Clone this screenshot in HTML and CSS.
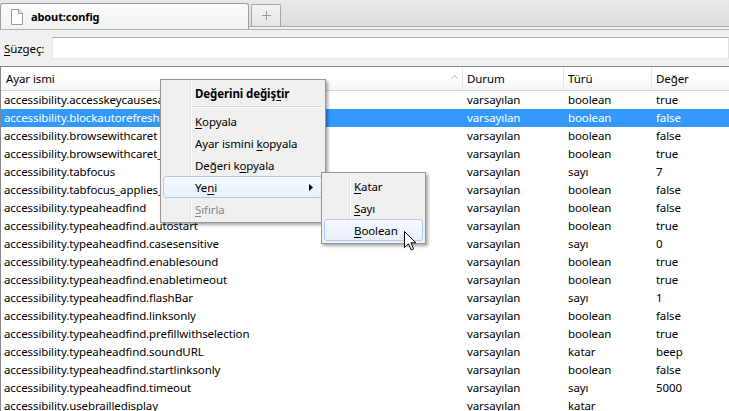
FILE: index.html
```html
<!DOCTYPE html>
<html lang="tr">
<head>
<meta charset="utf-8">
<title>about:config</title>
<link rel="stylesheet" href="styles.css">
</head>
<body>
<div class="tabstrip">
  <div class="tab">
    <svg class="pageicon" width="14" height="16" viewBox="0 0 14 16"><path d="M1.5 0.5 H9 L12.5 4 V15.5 H1.5 Z" fill="#fff" stroke="#9a9a9a"/><path d="M8.5 0.5 V4.5 H12.5" fill="#eee" stroke="#9a9a9a"/></svg>
    <span class="tabtitle">about:config</span>
  </div>
  <div class="newtab"><svg width="9" height="9" viewBox="0 0 9 9"><path d="M4.5 0 V9 M0 4.5 H9" stroke="#9a9a9a" stroke-width="1"/></svg></div>
</div>
<div class="toolbar">
  <span class="flabel"><u>S</u>üzgeç:</span>
  <div class="finput"></div>
</div>
<div class="tree">
  <div class="thead">
    <div class="hc hc-name"><span>Ayar ismi</span><svg class="sortarrow" width="7" height="4" viewBox="0 0 7 4"><path d="M0.5 3.5 L3.5 0.5 L6.5 3.5" fill="none" stroke="#a3b4c8"/></svg></div>
    <div class="hc">Durum</div>
    <div class="hc">Türü</div>
    <div class="hc hc-last">Değer</div>
  </div>
  <div class="row"><span>accessibility.accesskeycausesactivation</span><span>varsayılan</span><span>boolean</span><span>true</span></div>
  <div class="row sel"><span>accessibility.blockautorefresh</span><span>varsayılan</span><span>boolean</span><span>false</span></div>
  <div class="row"><span>accessibility.browsewithcaret</span><span>varsayılan</span><span>boolean</span><span>false</span></div>
  <div class="row"><span>accessibility.browsewithcaret_shortcut.enabled</span><span>varsayılan</span><span>boolean</span><span>true</span></div>
  <div class="row"><span>accessibility.tabfocus</span><span>varsayılan</span><span>sayı</span><span>7</span></div>
  <div class="row"><span>accessibility.tabfocus_applies_to_xul</span><span>varsayılan</span><span>boolean</span><span>false</span></div>
  <div class="row"><span>accessibility.typeaheadfind</span><span>varsayılan</span><span>boolean</span><span>false</span></div>
  <div class="row"><span>accessibility.typeaheadfind.autostart</span><span>varsayılan</span><span>boolean</span><span>true</span></div>
  <div class="row"><span>accessibility.typeaheadfind.casesensitive</span><span>varsayılan</span><span>sayı</span><span>0</span></div>
  <div class="row"><span>accessibility.typeaheadfind.enablesound</span><span>varsayılan</span><span>boolean</span><span>true</span></div>
  <div class="row"><span>accessibility.typeaheadfind.enabletimeout</span><span>varsayılan</span><span>boolean</span><span>true</span></div>
  <div class="row"><span>accessibility.typeaheadfind.flashBar</span><span>varsayılan</span><span>sayı</span><span>1</span></div>
  <div class="row"><span>accessibility.typeaheadfind.linksonly</span><span>varsayılan</span><span>boolean</span><span>false</span></div>
  <div class="row"><span>accessibility.typeaheadfind.prefillwithselection</span><span>varsayılan</span><span>boolean</span><span>true</span></div>
  <div class="row"><span>accessibility.typeaheadfind.soundURL</span><span>varsayılan</span><span>katar</span><span>beep</span></div>
  <div class="row"><span>accessibility.typeaheadfind.startlinksonly</span><span>varsayılan</span><span>boolean</span><span>false</span></div>
  <div class="row"><span>accessibility.typeaheadfind.timeout</span><span>varsayılan</span><span>sayı</span><span>5000</span></div>
  <div class="row"><span>accessibility.usebrailledisplay</span><span>varsayılan</span><span>katar</span><span></span></div>
</div>

<div class="menu menu-main">
  <div class="mi bold">Değerini değiş<u>t</u>ir</div>
  <div class="msep"></div>
  <div class="mi"><u>K</u>opyala</div>
  <div class="mi">Ayar ismini <u>k</u>opyala</div>
  <div class="mi">Değeri k<u>o</u>pyala</div>
  <div class="mi hot">Ye<u>n</u>i<svg class="subarrow" width="4" height="7" viewBox="0 0 4 7"><path d="M0 0 L4 3.5 L0 7 Z" fill="#000"/></svg></div>
  <div class="mi dis"><u>S</u>ıfırla</div>
</div>

<div class="menu menu-sub">
  <div class="mi"><u>K</u>atar</div>
  <div class="mi"><u>S</u>ayı</div>
  <div class="mi hot"><u>B</u>oolean</div>
</div>

<svg class="cursor" width="13" height="21" viewBox="0 0 13 21"><path d="M0.5 0.5 L0.5 16.5 L4.5 12.8 L7.2 19 L9.6 17.9 L7 11.8 L11.8 11.8 Z" fill="#fff" stroke="#000" stroke-linejoin="miter"/></svg>
</body>
</html>
```

FILE: styles.css
```css
html, body {
  margin: 0;
  padding: 0;
}
body {
  width: 729px;
  height: 411px;
  overflow: hidden;
  position: relative;
  background: #fff;
  font-family: "Noto Sans", "Segoe UI", sans-serif;
  font-size: 11.5px;
  letter-spacing: -0.1px;
  color: #000;
}
u { text-decoration: underline; text-underline-offset: 2px; }

/* Tab strip */
.tabstrip {
  height: 29px;
  border-bottom: 1px solid #b2b2b2;
  background: linear-gradient(#e9e9e9, #dddddd 26px, #a8a8a8 26px, #a8a8a8 27px, #f2f2f2 27px);
  display: flex;
  align-items: flex-end;
}
.tab {
  box-sizing: border-box;
  width: 249px;
  height: 26px;
  border: 1px solid #9d9d9d;
  border-bottom: none;
  border-radius: 3px 3px 0 0;
  background: linear-gradient(#fbfbfb, #f2f2f2);
  display: flex;
  align-items: center;
  padding-left: 9px;
}
.pageicon { flex: none; margin-right: 7px; margin-top: 1px; }
.tabtitle { font-weight: bold; font-size: 11px; }
.newtab {
  box-sizing: border-box;
  width: 30px;
  height: 22px;
  margin: 0 0 3px 2px;
  border: 1px solid #a8a8a8;
  border-bottom: none;
  border-radius: 2px 2px 0 0;
  background: linear-gradient(#f3f3f3, #e6e6e6);
  display: flex;
  align-items: center;
  justify-content: center;
}

/* Filter bar */
.toolbar {
  background: #f0f0f0;
  height: 36px;
  box-sizing: border-box;
  padding: 7px 0;
  display: flex;
  align-items: center;
}
.flabel {
  width: 52px;
  box-sizing: border-box;
  padding-left: 4px;
  flex: none;
}
.finput {
  flex: 1;
  height: 22px;
  box-sizing: border-box;
  background: #fff;
  border: 1px solid;
  border-color: #abadb3 #dbdfe6 #e3e9ef #e2e3ea;
}

/* Tree */
.tree {
  border-top: 1px solid #828790;
  border-left: 1px solid #828790;
}
.thead, .row {
  display: grid;
  grid-template-columns: 462px 101px 88px 1fr;
}
.thead {
  height: 23px;
  border-bottom: 1px solid #d5d5d5;
  background: linear-gradient(#ffffff 45%, #f4f5f7);
}
.hc {
  display: flex;
  align-items: center;
  padding-left: 4px;
  border-right: 1px solid #e3e8ee;
}
.hc-name { padding-left: 5px; justify-content: space-between; padding-right: 4px; }
.hc-last { border-right: none; }
.sortarrow { margin-top: -3px; }
.row {
  height: 18px;
  line-height: 18px;
}
.row span {
  padding-left: 4px;
  white-space: nowrap;
  overflow: hidden;
}
.row span:first-child { padding-left: 3px; }
.row.sel { background: #3399ff; color: #fff; }

/* Context menus */
.menu {
  position: absolute;
  box-sizing: border-box;
  border: 1px solid #979797;
  background: #f0f0f0;
  padding: 2px;
  box-shadow: 2px 2px 3px rgba(0, 0, 0, 0.35);
}
.menu::before {
  content: "";
  position: absolute;
  top: 1px;
  bottom: 1px;
  width: 1px;
  background: #e2e3e3;
  box-shadow: 1px 0 0 #ffffff;
}
.menu-main { left: 160px; top: 79px; width: 166px; }
.menu-main::before { left: 29px; }
.menu-sub { left: 321px; top: 172px; width: 105px; }
.menu-sub::before { left: 27px; }
.mi {
  position: relative;
  height: 22px;
  line-height: 21px;
  padding-left: 31px;
  border: 1px solid transparent;
  box-sizing: border-box;
  border-radius: 3px;
  white-space: nowrap;
}
.menu-sub .mi { padding-left: 29px; }
.mi.bold { font-weight: bold; }
.mi.dis { color: #858585; }
.mi.hot {
  border-color: #aeccf1;
  background: linear-gradient(#f6f9fd, #e8f1fc);
}
.msep {
  height: 1px;
  margin: 2px 0 3px 29px;
  background: #e0e0e0;
  box-shadow: 0 1px 0 #fff;
}
.subarrow { position: absolute; right: 9px; top: 7px; }
.cursor { position: absolute; left: 404px; top: 231px; }
```
